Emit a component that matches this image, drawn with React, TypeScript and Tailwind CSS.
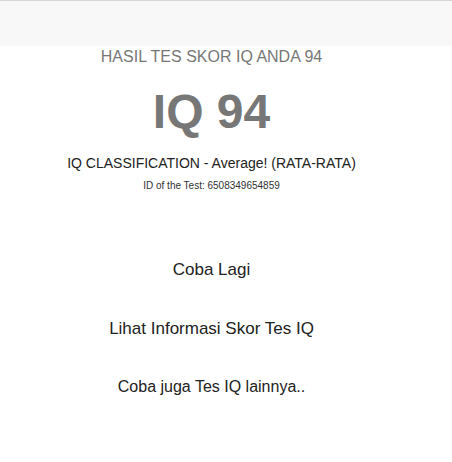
import React from "react";

export default function App() {
  return (
    <div
      className="w-[452px] h-[462px] bg-white overflow-hidden"
      style={{ fontFamily: '"Liberation Sans", Arial, sans-serif' }}
    >
      <div className="h-[46px] bg-[#f8f8f8] border-t border-[#d6d6d6]" />
      <div className="w-[423px] flex flex-col items-center text-center">
        <div className="mt-[1px] text-[16px] leading-[20px] text-[#777777]">
          HASIL TES SKOR IQ ANDA 94
        </div>
        <div className="mt-[21px] text-[48px] leading-[48px] font-bold text-[#777777]">
          IQ 94
        </div>
        <div className="mt-[17px] text-[14px] leading-[20px] text-[#222222]">
          IQ CLASSIFICATION - Average! (RATA-RATA)
        </div>
        <div className="mt-[6px] text-[10px] leading-[14px] text-[#333333]">
          ID of the Test: 6508349654859
        </div>
        <a className="mt-[65px] text-[17px] leading-[24px] text-[#222222] cursor-pointer">
          Coba Lagi
        </a>
        <a className="mt-[35px] text-[17px] leading-[24px] text-[#222222] cursor-pointer">
          Lihat Informasi Skor Tes IQ
        </a>
        <a className="mt-[34px] text-[16px] leading-[24px] text-[#222222] cursor-pointer">
          Coba juga Tes IQ lainnya..
        </a>
      </div>
    </div>
  );
}
